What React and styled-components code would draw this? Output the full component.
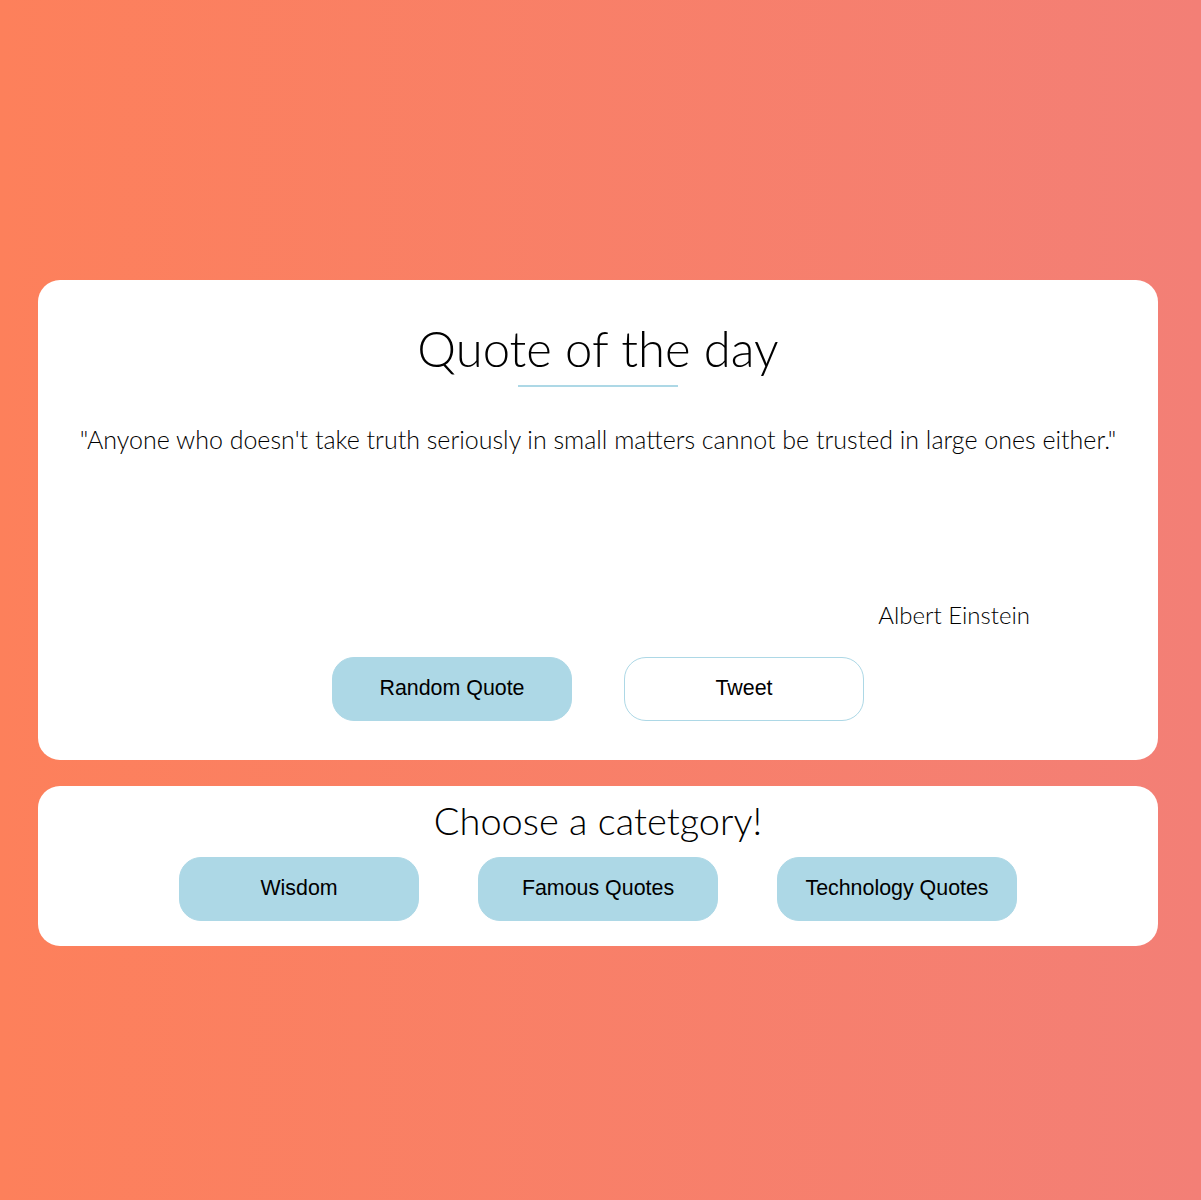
import React from "react";
import styled, { createGlobalStyle } from "styled-components";

const GlobalStyle = createGlobalStyle`
  html, body {
    margin: 0;
    padding: 0;
  }
  body {
    min-height: 1200px;
    background: linear-gradient(to right, #fd805b, #f37f76);
    font-family: "Lato", "Open Sans", sans-serif;
  }
`;

const Page = styled.main`
  box-sizing: border-box;
  padding: 280px 43px 0 38px;
  display: flex;
  flex-direction: column;
  gap: 26px;
`;

const Card = styled.section`
  background: #fff;
  border-radius: 22px;
  box-sizing: border-box;
  display: flex;
  flex-direction: column;
  align-items: center;
  padding: ${(p) => p.$pad};
  height: ${(p) => p.$h}px;
`;

const Title = styled.h1`
  margin: 0;
  font-family: "Lato", sans-serif;
  font-weight: 300;
  font-size: 49px;
  line-height: 56px;
  color: #000;
`;

const Rule = styled.div`
  width: 160px;
  height: 2px;
  background: #add8e6;
  margin-top: 9px;
`;

const QuoteText = styled.p`
  margin: 37px 0 0;
  font-family: "Lato", sans-serif;
  font-weight: 300;
  font-size: 25px;
  line-height: 30px;
  text-align: center;
  color: #000;
`;

const Author = styled.p`
  align-self: flex-end;
  margin: 146px 88px 0 0;
  font-family: "Lato", sans-serif;
  font-weight: 300;
  font-size: 24px;
  line-height: 30px;
  color: #000;
`;

const Row = styled.div`
  display: flex;
  gap: ${(p) => p.$gap}px;
  margin-top: ${(p) => p.$top}px;
`;

const Button = styled.button`
  width: 240px;
  height: 64px;
  border-radius: 22px;
  font-family: "Liberation Sans", Arial, sans-serif;
  font-size: 21.4px;
  color: #000;
  cursor: pointer;
  padding: 0 0 2px;
  background: ${(p) => (p.$outline ? "#fff" : "#add8e6")};
  border: 1px solid #add8e6;
`;

const Heading = styled.h2`
  margin: 0;
  font-family: "Lato", sans-serif;
  font-weight: 300;
  font-size: 38px;
  line-height: 44px;
  color: #000;
`;

export default function App() {
  return (
    <>
      <GlobalStyle />
      <Page>
        <Card $h={480} $pad="40px 40px 0">
          <Title>Quote of the day</Title>
          <Rule />
          <QuoteText>
            "Anyone who doesn't take truth seriously in small matters cannot be trusted in large ones either."
          </QuoteText>
          <Author>Albert Einstein</Author>
          <Row $gap={52} $top={27}>
            <Button>Random Quote</Button>
            <Button $outline>Tweet</Button>
          </Row>
        </Card>
        <Card $h={160} $pad="12px 40px 0">
          <Heading>Choose a catetgory!</Heading>
          <Row $gap={59} $top={15}>
            <Button>Wisdom</Button>
            <Button>Famous Quotes</Button>
            <Button>Technology Quotes</Button>
          </Row>
        </Card>
      </Page>
    </>
  );
}
